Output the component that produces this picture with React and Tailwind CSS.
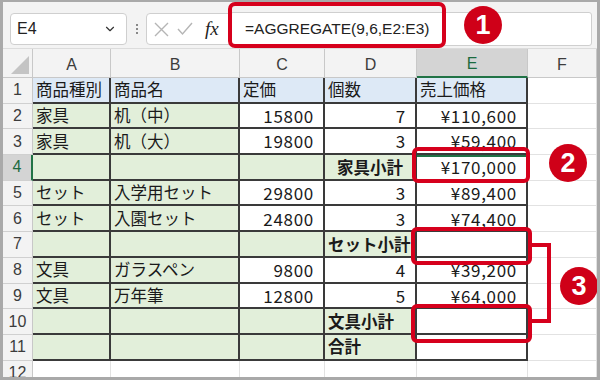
import React from 'react';
import { ChevronDown } from 'lucide-react';

const rows = [
    { a: '商品種別', b: '商品名', c: '定価', d: '個数', e: '売上価格', head: true },
    { a: '家具', b: '机（中）', c: '15800', d: '7', e: '¥110,600' },
    { a: '家具', b: '机（大）', c: '19800', d: '3', e: '¥59,400' },
    { sub: '家具小計', e: '¥170,000', center: true },
    { a: 'セット', b: '入学用セット', c: '29800', d: '3', e: '¥89,400' },
    { a: 'セット', b: '入園セット', c: '24800', d: '3', e: '¥74,400' },
    { sub: 'セット小計' },
    { a: '文具', b: 'ガラスペン', c: '9800', d: '4', e: '¥39,200' },
    { a: '文具', b: '万年筆', c: '12800', d: '5', e: '¥64,000' },
    { sub: '文具小計' },
    { sub: '合計' },
];

const cols = ['A', 'B', 'C', 'D', 'E', 'F'];

function Cell({ bg, right, bold, center, children, extra = '' }) {
    return (
        <div
            className={`h-full flex items-center border-r-2 border-b-2 border-[#3a3a3a] ${bg} ${right ? 'justify-end pr-[9px] text-[17px] tracking-[0.7px]' : center ? 'justify-center' : 'pl-[3px]'} ${bold ? 'font-bold' : ''} ${extra}`}
        >
            {children}
        </div>
    );
}

function Badge({ n, className }) {
    return (
        <div className={`absolute w-[38px] h-[38px] rounded-full bg-[#cf0018] flex items-center justify-center text-white font-bold text-[27px] font-['Liberation_Sans',sans-serif] ${className}`}>
            {n}
        </div>
    );
}

export default function App() {
    return (
        <div className="relative w-[600px] h-[380px] overflow-hidden bg-white border-[3px] border-t-2 border-[#a9a9a9] font-['Noto_Sans_CJK_JP',sans-serif] text-[#1a1a1a]">
            {/* formula bar */}
            <div className="h-[47px] bg-[#f3f3f3] flex items-start pt-[11px] pl-[7px] border-b border-[#dcdcdc]">
                <div className="w-[117px] h-[32px] bg-white border border-[#cfcfcf] rounded-[4px] flex items-center justify-between pl-[6px] pr-[9px]">
                    <span className="text-[16px] font-['Liberation_Sans',sans-serif] text-[#222]">E4</span>
                    <ChevronDown size={14} strokeWidth={2} className="text-[#333]" />
                </div>
                <div className="w-[19px] h-[32px] flex flex-col items-center justify-center gap-[2px]">
                    <span className="w-[2px] h-[2px] bg-[#888]" />
                    <span className="w-[2px] h-[2px] bg-[#888]" />
                    <span className="w-[2px] h-[2px] bg-[#888]" />
                </div>
                <div className="w-[84px] h-[32px] bg-white border border-[#cfcfcf] rounded-l-[4px] flex items-center pl-[7px] gap-[8px]">
                    <svg width="15" height="15" viewBox="0 0 15 15" className="text-[#b5b5b5]">
                        <path d="M1 1 L14 14 M14 1 L1 14" stroke="currentColor" strokeWidth="1.4" fill="none" />
                    </svg>
                    <svg width="16" height="14" viewBox="0 0 16 14" className="text-[#b5b5b5]">
                        <path d="M1 7 L5.5 12 L15 1" stroke="currentColor" strokeWidth="1.4" fill="none" />
                    </svg>
                    <span className="ml-[4px] italic font-['Liberation_Serif',serif] text-[19px] text-[#222]">fx</span>
                </div>
                <div className="w-[362px] h-[34px] -mt-[1px] bg-white border border-[#cfcfcf] rounded-[3px] flex items-center pl-[14px]">
                    <span className="text-[15.5px] font-['Liberation_Sans',sans-serif] text-[#222]">=AGGREGATE(9,6,E2:E3)</span>
                </div>
            </div>

            {/* sheet */}
            <div className="grid grid-cols-[30px_78px_129px_85px_92px_111px_69px] grid-rows-[29px_repeat(12,25.7px)] text-[16.5px]">
                <div className="bg-[#f3f3f3] border-r border-b border-[#c8c8c8] relative">
                    <div className="absolute right-[3px] bottom-[3px] w-0 h-0 border-l-[18px] border-l-transparent border-b-[18px] border-b-[#c4c4c4]" />
                </div>
                {cols.map(c => (
                    <div
                        key={c}
                        className={`flex items-center justify-center pt-[3px] font-['Liberation_Sans',sans-serif] text-[16px] ${c === 'E' ? 'bg-[#d4d4d4] text-[#1b6b3f] border-b-2 border-[#217346] border-r border-r-[#c8c8c8]' : 'bg-[#f3f3f3] text-[#3c3c3c] border-r border-b border-[#c8c8c8]'}`}
                    >
                        {c}
                    </div>
                ))}

                {rows.map((r, i) => {
                    const n = i + 1;
                    const left = r.head ? 'bg-[#dde9f6]' : 'bg-[#e2efda]';
                    const mid = r.head ? 'bg-[#dde9f6]' : r.sub ? 'bg-[#e2efda]' : 'bg-white';
                    const eBg = r.head ? 'bg-[#dde9f6]' : 'bg-white';
                    return (
                        <React.Fragment key={n}>
                            <div className={`flex items-center justify-center font-['Liberation_Sans',sans-serif] text-[16px] border-b border-[#d0d0d0] ${n === 4 ? 'bg-[#d4d4d4] text-[#1b6b3f] border-r-2 border-r-[#217346]' : 'bg-[#f3f3f3] text-[#3c3c3c] border-r border-r-[#c8c8c8]'}`}>
                                {n}
                            </div>
                            <Cell bg={left}>{r.a}</Cell>
                            <Cell bg={left}>{r.b}</Cell>
                            <Cell bg={mid} right={!r.head}>{r.c}</Cell>
                            {r.sub ? (
                                <Cell bg={mid} bold center={r.center}>{r.sub}</Cell>
                            ) : (
                                <Cell bg={mid} right={!r.head}>{r.d}</Cell>
                            )}
                            <Cell bg={eBg} right={!r.head} extra={n === 4 ? 'shadow-[inset_0_2px_0_#217346]' : ''}>{r.e}</Cell>
                            <div className="border-r border-b border-[#e2e2e2]" />
                        </React.Fragment>
                    );
                })}

                <div className="flex items-center justify-center font-['Liberation_Sans',sans-serif] text-[16px] bg-[#f3f3f3] text-[#3c3c3c] border-r border-[#c8c8c8]">12</div>
                {cols.map(c => (
                    <div key={c} className="border-r border-[#e2e2e2]" />
                ))}
            </div>

            {/* callouts */}
            <div className="absolute left-[225px] top-0 w-[218px] h-[46px] border-4 border-[#d6001c] rounded-[7px]" />
            <Badge n="1" className="left-[461px] top-[4px]" />

            <div className="absolute left-[409px] top-[145px] w-[118px] h-[36px] border-4 border-[#d6001c] rounded-[6px]" />
            <Badge n="2" className="left-[546px] top-[142px]" />

            <div className="absolute left-[408px] top-[225px] w-[121px] h-[38px] border-4 border-[#d6001c] rounded-[6px]" />
            <div className="absolute left-[408px] top-[302px] w-[121px] h-[39px] border-4 border-[#d6001c] rounded-[6px]" />
            <div className="absolute left-[528px] top-[241px] w-[20px] h-[80px] border-4 border-l-0 border-[#d6001c]" />
            <Badge n="3" className="left-[557px] top-[265px]" />
        </div>
    );
}
